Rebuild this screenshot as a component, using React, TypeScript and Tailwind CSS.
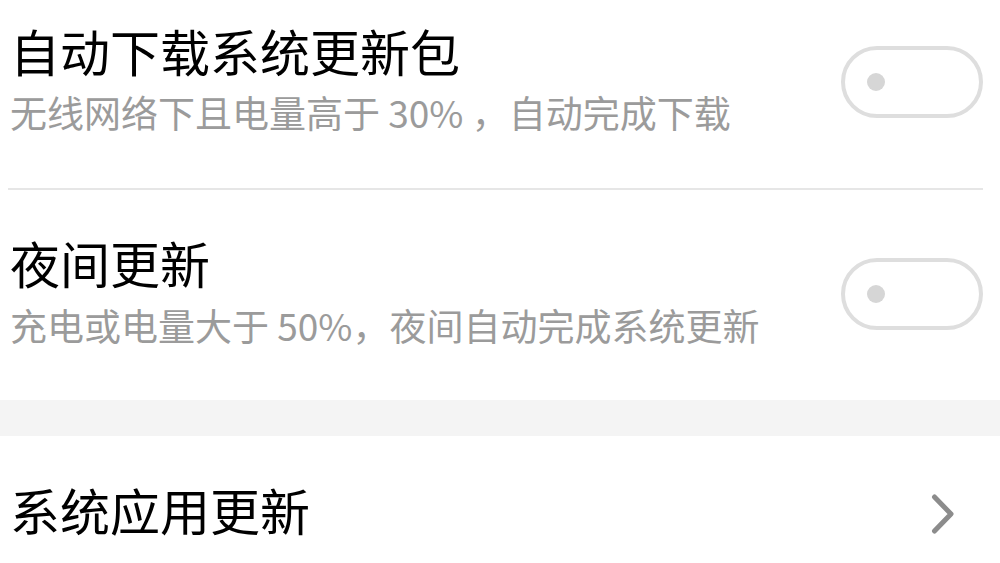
import React from "react";

const font = {
  fontFamily: '"Noto Sans CJK SC", "Noto Sans", sans-serif',
};

function Toggle() {
  return (
    <div className="w-[142px] h-[72px] rounded-full border-[4px] border-[#dedede] bg-white flex items-center pl-[22px] shrink-0">
      <div className="w-[18px] h-[18px] rounded-full bg-[#d6d6d6]" />
    </div>
  );
}

function Chevron() {
  return (
    <svg width="24" height="42" viewBox="0 0 24 42" className="shrink-0">
      <path
        d="M4.5 4 L21 21 L4.5 38"
        fill="none"
        stroke="#8c8c8c"
        strokeWidth="5"
        strokeLinecap="round"
        strokeLinejoin="round"
      />
    </svg>
  );
}

export default function App() {
  return (
    <div className="w-[1000px] h-[563px] bg-white overflow-hidden flex flex-col" style={font}>
      {/* auto download */}
      <div className="h-[188px] flex justify-between items-start pl-[10px] pr-[17px] shrink-0">
        <div className="pt-[25px] flex flex-col">
          <div className="text-[50px] leading-none text-black whitespace-nowrap">自动下载系统更新包</div>
          <div className="mt-[19px] text-[37px] leading-none text-[#9b9b9b] whitespace-nowrap">
            无线网络下且电量高于 30% ，自动完成下载
          </div>
        </div>
        <div className="mt-[46px]">
          <Toggle />
        </div>
      </div>

      <div className="h-[2px] ml-[8px] mr-[17px] bg-[#e6e6e6] shrink-0" />

      {/* night update */}
      <div className="h-[210px] flex justify-between items-start pl-[10px] pr-[17px] shrink-0">
        <div className="pt-[47px] flex flex-col">
          <div className="text-[50px] leading-none text-black whitespace-nowrap">夜间更新</div>
          <div className="mt-[20px] text-[37px] leading-none text-[#9b9b9b] whitespace-nowrap">
            充电或电量大于 50%，夜间自动完成系统更新
          </div>
        </div>
        <div className="mt-[68px]">
          <Toggle />
        </div>
      </div>

      <div className="h-[36px] bg-[#f4f4f4] shrink-0" />

      {/* system apps */}
      <div className="flex-1 flex justify-between items-start pl-[10px] pr-[46px]">
        <div className="pt-[48px] text-[50px] leading-none text-black whitespace-nowrap">系统应用更新</div>
        <div className="mt-[57px]">
          <Chevron />
        </div>
      </div>
    </div>
  );
}
